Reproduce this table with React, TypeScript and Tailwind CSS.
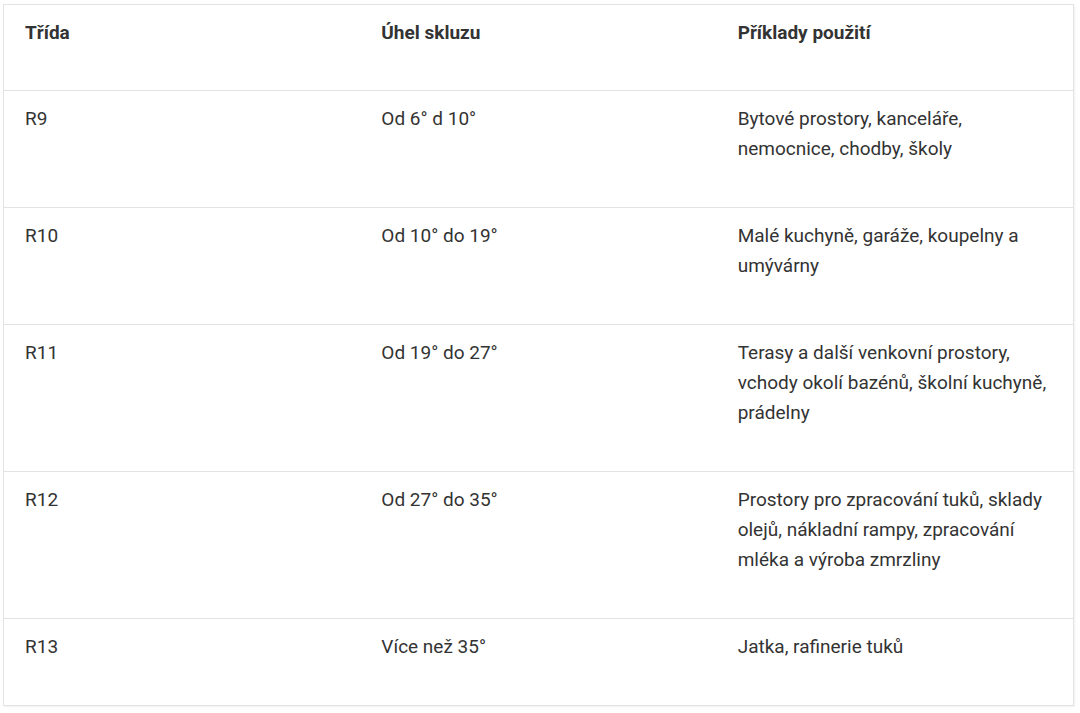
const rows: [string, string, string][] = [
  ["R9", "Od 6° d 10°", "Bytové prostory, kanceláře, nemocnice, chodby, školy"],
  ["R10", "Od 10° do 19°", "Malé kuchyně, garáže, koupelny a umývárny"],
  ["R11", "Od 19° do 27°", "Terasy a další venkovní prostory, vchody okolí bazénů, školní kuchyně, prádelny"],
  ["R12", "Od 27° do 35°", "Prostory pro zpracování tuků, sklady olejů, nákladní rampy, zpracování mléka a výroba zmrzliny"],
  ["R13", "Více než 35°", "Jatka, rafinerie tuků"],
];

export default function App() {
  return (
    <div className="min-h-[713px] bg-white pl-[3px] pt-[4px] pr-[6px] pb-[7px] font-['Roboto',sans-serif] text-[19px] leading-[30px] text-[#333]">
      <div className="border border-[#e3e3e3] bg-white shadow-[1px_1px_2px_rgba(0,0,0,0.06)]">
        <div className="grid grid-cols-3 border-b border-[#e3e3e3] font-bold">
          <div className="pl-[21px] pr-[21px] pt-[13px] pb-[42px]">Třída</div>
          <div className="pl-[21px] pr-[21px] pt-[13px] pb-[42px]">Úhel skluzu</div>
          <div className="pl-[21px] pr-[21px] pt-[13px] pb-[42px]">Příklady použití</div>
        </div>
        {rows.map((r, i) => (
          <div
            key={r[0]}
            className={
              i < rows.length - 1
                ? "grid grid-cols-3 border-b border-[#e3e3e3]"
                : "grid grid-cols-3"
            }
          >
            <div className="pl-[21px] pr-[21px] pt-[13px] pb-[43px]">{r[0]}</div>
            <div className="pl-[21px] pr-[21px] pt-[13px] pb-[43px]">{r[1]}</div>
            <div className="pl-[21px] pr-[21px] pt-[13px] pb-[43px]">{r[2]}</div>
          </div>
        ))}
      </div>
    </div>
  );
}
